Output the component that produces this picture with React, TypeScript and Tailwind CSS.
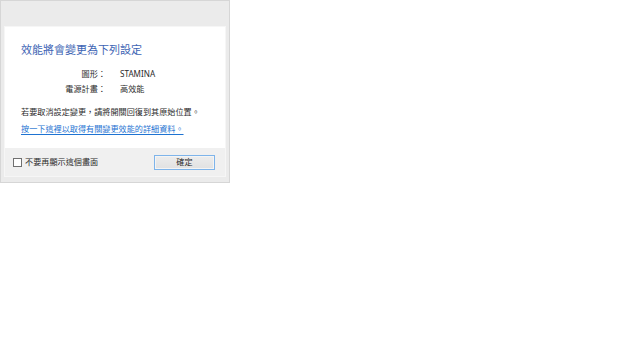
export default function App() {
  return (
    <div className="w-[640px] h-[360px] bg-white font-['Noto_Sans','Noto_Sans_CJK_TC',sans-serif]">
      <div className="w-[230px] h-[183px] border border-[#d6d6d6] bg-[#ebebeb] px-[3px] pt-[25px] pb-[5px]">
        <div className="h-full border border-[#f6f6f6] flex flex-col">
          <div className="bg-white h-[121px] pl-[16px] pt-[15px]">
            <div className="text-[11px] leading-[15px] text-[#3d64b4]">效能將會變更為下列設定</div>
            <div className="mt-[9px] text-[8.15px] leading-[15px] text-[#2b2b2b]">
              <div className="flex">
                <div className="w-[85px] text-right">圖形：</div>
                <div className="ml-[14px]">STAMINA</div>
              </div>
              <div className="flex">
                <div className="w-[85px] text-right">電源計畫：</div>
                <div className="ml-[14px]">高效能</div>
              </div>
            </div>
            <div className="mt-[8px] text-[8.15px] leading-[15px] text-[#2b2b2b]">若要取消設定變更，請將開關回復到其原始位置。</div>
            <div className="mt-[2px] text-[8.15px] leading-[15px] text-[#1e73d2] underline underline-offset-[2px]">按一下這裡以取得有關變更效能的詳細資料。</div>
          </div>
          <div className="flex-1 bg-[#f0f0f0] flex items-center justify-between pl-[8px] pr-[10px]">
            <div className="flex items-center">
              <div className="w-[9px] h-[9px] border border-[#707070] bg-white"></div>
              <span className="ml-[3px] text-[8.15px] leading-[12px] text-[#2b2b2b]">不要再顯示這個畫面</span>
            </div>
            <div className="w-[61px] h-[15px] border border-[#7eb4ea] bg-[#e8e8e8] flex items-center justify-center">
              <div className="w-full h-full border border-[#f4f4f4] bg-gradient-to-b from-[#ececec] to-[#e2e2e2] flex items-center justify-center text-[8.15px] leading-[10px] text-[#2b2b2b]">確定</div>
            </div>
          </div>
        </div>
      </div>
    </div>
  );
}
